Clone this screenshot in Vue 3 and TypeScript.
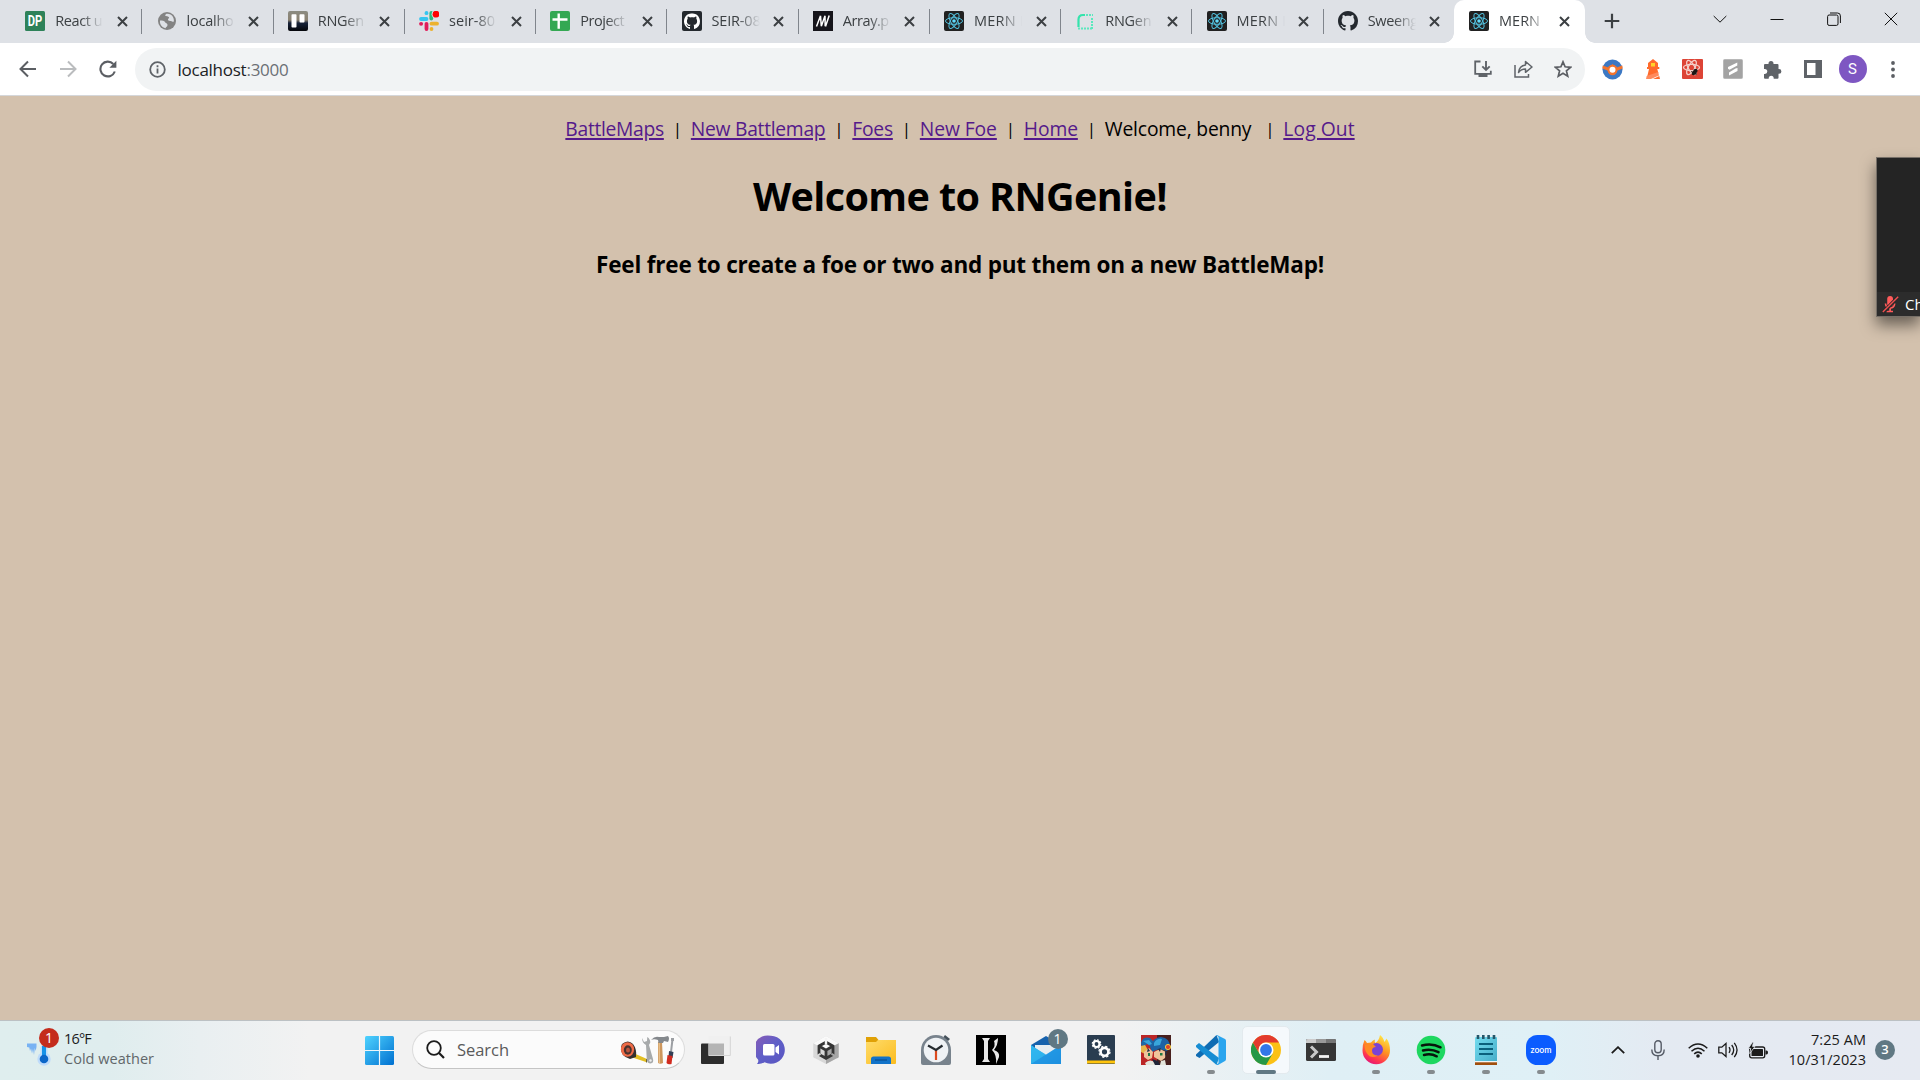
<script setup lang="ts">
interface Tab {
  icon: string
  title: string
  width: number
}

interface NavItem {
  label: string
  width: number
  link: boolean
}

const tabs: Tab[] = [
  { icon: 'dp', title: 'React u', width: 47 },
  { icon: 'globe', title: 'localho', width: 47 },
  { icon: 'trello', title: 'RNGen', width: 46 },
  { icon: 'slack', title: 'seir-80', width: 46 },
  { icon: 'sheet', title: 'Project', width: 44 },
  { icon: 'github-dark', title: 'SEIR-08', width: 49 },
  { icon: 'mdn', title: 'Array.p', width: 46 },
  { icon: 'react', title: 'MERN I', width: 50 },
  { icon: 'railway', title: 'RNGen', width: 46 },
  { icon: 'react', title: 'MERN I', width: 50 },
  { icon: 'github', title: 'Sweeng', width: 50 },
  { icon: 'react', title: 'MERN', width: 41 },
]

const navItems: NavItem[] = [
  { label: 'BattleMaps', width: 98.5, link: true },
  { label: 'New Battlemap', width: 134.5, link: true },
  { label: 'Foes', width: 40.5, link: true },
  { label: 'New Foe', width: 77, link: true },
  { label: 'Home', width: 54, link: true },
  { label: 'Welcome, benny', width: 146.5, link: false },
  { label: 'Log Out', width: 71.3, link: true },
]

const apps: string[] = [
  'taskview', 'chat', 'unity', 'explorer', 'clock', 'klei', 'mail', 'services',
  'game', 'vscode', 'chrome', 'terminal', 'firefox', 'spotify', 'notepad', 'zoom',
]
const running = new Set(['vscode', 'chrome', 'firefox', 'spotify', 'notepad', 'zoom'])

// Tracks a label in or out so that it occupies the given width.
const vFit = {
  mounted(el: HTMLElement, binding: { value: number }) {
    const chars = (el.textContent ?? '').length
    const spacing = (binding.value - el.getBoundingClientRect().width) / chars
    el.style.letterSpacing = `${spacing.toFixed(3)}px`
  },
}
</script>

<template>
  <div class="screen">
    <svg width="0" height="0" class="defs">
      <defs>
        <linearGradient id="win" x1="0" y1="0" x2="1" y2="1"><stop offset="0" stop-color="#4fd3ff" /><stop offset="1" stop-color="#0070d0" /></linearGradient>
        <linearGradient id="chatg" x1="0" y1="0" x2="1" y2="1"><stop offset="0" stop-color="#8a5bb5" /><stop offset=".5" stop-color="#5f5fc8" /><stop offset="1" stop-color="#5a55c0" /></linearGradient>
        <linearGradient id="fold" x1="0" y1="0" x2="1" y2="1"><stop offset="0" stop-color="#ffdc6b" /><stop offset="1" stop-color="#fbbc1f" /></linearGradient>
        <linearGradient id="ff" x1=".8" y1="0" x2=".3" y2="1"><stop offset="0" stop-color="#fff04a" /><stop offset=".45" stop-color="#ff9520" /><stop offset=".8" stop-color="#ff3550" /><stop offset="1" stop-color="#e3157a" /></linearGradient>
        <linearGradient id="note" x1="0" y1="0" x2="1" y2="1"><stop offset="0" stop-color="#74dcef" /><stop offset="1" stop-color="#45acc8" /></linearGradient>
        <linearGradient id="mailg" x1="0" y1="0" x2="1" y2="1"><stop offset="0" stop-color="#35c3f5" /><stop offset="1" stop-color="#1377cf" /></linearGradient>
        <linearGradient id="trel" x1="0" y1="0" x2="0" y2="1"><stop offset="0" stop-color="#8c8c82" /><stop offset=".45" stop-color="#8b8272" /><stop offset=".6" stop-color="#17233a" /><stop offset="1" stop-color="#05060a" /></linearGradient>
      </defs>
      <symbol id="react" viewBox="0 0 20 20">
        <rect width="20" height="20" rx="2" fill="#212121" />
        <g fill="none" stroke="#53c1de" stroke-width="1">
          <ellipse cx="10" cy="10" rx="8.5" ry="3.3" />
          <ellipse cx="10" cy="10" rx="8.5" ry="3.3" transform="rotate(60 10 10)" />
          <ellipse cx="10" cy="10" rx="8.5" ry="3.3" transform="rotate(120 10 10)" />
        </g>
        <circle cx="10" cy="10" r="1.8" fill="#61dafb" />
      </symbol>
      <symbol id="cat" viewBox="0 0 16 16">
        <path fill-rule="evenodd" d="M8 0C3.58 0 0 3.58 0 8c0 3.54 2.29 6.53 5.47 7.59.4.07.55-.17.55-.38 0-.19-.01-.82-.01-1.49-2.01.37-2.53-.49-2.69-.94-.09-.23-.48-.94-.82-1.13-.28-.15-.68-.52-.01-.53.63-.01 1.08.58 1.23.82.72 1.21 1.87.87 2.33.66.07-.52.28-.87.51-1.07-1.78-.2-3.64-.89-3.64-3.95 0-.87.31-1.59.82-2.15-.08-.2-.36-1.02.08-2.12 0 0 .67-.21 2.2.82.64-.18 1.32-.27 2-.27s1.36.09 2 .27c1.53-1.04 2.2-.82 2.2-.82.44 1.1.16 1.92.08 2.12.51.56.82 1.27.82 2.15 0 3.07-1.87 3.75-3.65 3.95.29.25.54.73.54 1.48 0 1.07-.01 1.93-.01 2.2 0 .21.15.46.55.38A8.01 8.01 0 0 0 16 8c0-4.42-3.58-8-8-8z" />
      </symbol>
    </svg>

    <header class="tabstrip">
      <div v-for="(tab, i) in tabs" :key="i" class="tab" :class="{ active: i === tabs.length - 1, last: i === tabs.length - 2 }">
        <svg class="favicon" viewBox="0 0 20 20">
          <template v-if="tab.icon === 'dp'">
            <rect width="20" height="20" rx="1.5" fill="#2e8259" />
            <text x="10" y="15.2" text-anchor="middle" font-size="14" font-weight="700" fill="#fff" font-family="Roboto, sans-serif" textLength="14.5" lengthAdjust="spacingAndGlyphs">DP</text>
          </template>
          <template v-else-if="tab.icon === 'globe'">
            <circle cx="10" cy="10" r="9" fill="#838383" />
            <path d="M3 9.500c2 .2 4.500 0 5 1.500s2.500 1 2.500 3-1.500 1.500-2 3.200C5 16.500 2.500 13.500 3 9.500zM9 3c2-.8 5.500.2 7 3 .8 1.500 1 3 .8 4.500-1 1-1.500-.5-3-.5-2 .2-3-.5-2.800-1.700.2-1 1.500-.8 1-2C11.500 5.200 9 5.500 8 4.500z" fill="#dee1e6" />
          </template>
          <template v-else-if="tab.icon === 'trello'">
            <rect width="20" height="20" rx="2" fill="url(#trel)" />
            <rect x="3.500" y="3.200" width="5" height="13.300" rx=".8" fill="#fff" /><rect x="11.500" y="3.200" width="5" height="8.300" rx=".8" fill="#fff" />
          </template>
          <template v-else-if="tab.icon === 'slack'">
            <g stroke-width="3.800" stroke-linecap="round" fill="none">
              <path d="M2 8h5.500" stroke="#36c5f0" /><path d="M7.500 2v.2" stroke="#36c5f0" />
              <path d="M12.300 2v5.500" stroke="#2eb67d" />
              <path d="M12.500 12.700H18" stroke="#ecb22e" /><path d="M12.500 18v.1" stroke="#ecb22e" />
              <path d="M7.500 12.800V18" stroke="#e01e5a" /><path d="M2 12.800h.2" stroke="#e01e5a" />
            </g>
            <circle cx="16.800" cy="3.300" r="4.200" fill="#dee1e6" /><circle cx="17" cy="3.200" r="3.400" fill="#f00" />
          </template>
          <template v-else-if="tab.icon === 'sheet'">
            <rect width="20" height="20" rx="2" fill="#34a853" />
            <path d="M8.700 2.500v15.300M2.500 8.500h15" stroke="#fff" stroke-width="2.400" />
          </template>
          <template v-else-if="tab.icon === 'github-dark'">
            <rect width="20" height="20" rx="2" fill="#24292e" /><use href="#cat" x="2" y="2.300" width="16" height="16" fill="#fff" />
          </template>
          <use v-else-if="tab.icon === 'github'" href="#cat" width="20" height="20" fill="#24292f" />
          <template v-else-if="tab.icon === 'mdn'">
            <rect width="20" height="20" fill="#15141a" />
            <path d="M3.500 15.500 7.500 4.800M7.500 4.800 8.300 15.300M8.300 15.300 12 4.800M12 4.800l.2 10.500M16.200 4.500 12.500 15.500" stroke="#fff" stroke-width="1.500" fill="none" />
          </template>
          <template v-else-if="tab.icon === 'railway'">
            <path d="M3.500 16V8.500q0-4.500 4.500-4.500h2" fill="none" stroke="#34e3ac" stroke-width="2.200" />
            <path d="M11 4h7M17 7v11M3 17.500h14" fill="none" stroke="#5be8be" stroke-width="2" stroke-dasharray="2 1" />
          </template>
          <use v-else href="#react" width="20" height="20" />
        </svg>
        <span class="title"><span v-fit="tab.width">{{ tab.title }}</span></span>
        <svg class="close" viewBox="0 0 11 11"><path d="M1 1l9 9M10 1l-9 9" stroke="#3c4043" stroke-width="2" /></svg>
      </div>
      <svg class="plus" viewBox="0 0 16 16"><path d="M8 .7v14.600M.7 8h14.600" stroke="#3c4043" stroke-width="2.200" /></svg>
      <div class="controls">
        <svg viewBox="0 0 14 14"><path d="M.7 4 7 10.200 13.300 4" /></svg>
        <svg viewBox="0 0 14 14"><path d="M.5 7.500h13" /></svg>
        <svg viewBox="0 0 14 14"><rect x=".6" y="3" width="10.400" height="10.400" rx="1.500" /><path d="M3 1h7.500q2.900 0 2.900 2.900V11" /></svg>
        <svg viewBox="0 0 14 14"><path d="M.8.8l12.400 12.400M13.200.8.800 13.200" /></svg>
      </div>
    </header>

    <div class="toolbar">
      <div class="slot"><svg width="18" height="18" viewBox="0 0 18 18"><path d="M17 9H2M9 1.500 1.500 9 9 16.500" fill="none" stroke="#5b5e63" stroke-width="2" /></svg></div>
      <div class="slot"><svg width="18" height="18" viewBox="0 0 18 18"><path d="M1 9h15M9 1.500 16.500 9 9 16.500" fill="none" stroke="#babcbe" stroke-width="2" /></svg></div>
      <div class="slot"><svg width="18" height="18" viewBox="0 0 18 18"><path d="M15.800 11.500A7.400 7.400 0 1 1 14.300 4" fill="none" stroke="#5b5e63" stroke-width="2.100" /><path d="M17.400.8v7h-7z" fill="#5b5e63" /></svg></div>
      <div class="omnibox">
        <svg width="17" height="17" viewBox="0 0 17 17"><circle cx="8.500" cy="8.500" r="7.300" fill="none" stroke="#5f6368" stroke-width="1.800" /><path d="M8.500 7.500v5M8.500 4.200v2" stroke="#5f6368" stroke-width="1.800" /></svg>
        <span class="url" v-fit="111">localhost<span class="port">:3000</span></span>
        <div class="actions">
          <svg width="18" height="18" viewBox="0 0 18 18"><path d="M6.500 1.500H1.200v12.300h15.600v-3" fill="none" stroke="#5f6368" stroke-width="1.800" /><path d="M4.500 14h9v3h-9z" fill="#5f6368" /><path d="M12 1v8.500M8.300 6.300l3.700 3.700 3.700-3.700" fill="none" stroke="#5f6368" stroke-width="1.900" /></svg>
          <svg width="19" height="18" viewBox="0 0 19 18"><path d="M1 5v12h13.500v-3" fill="none" stroke="#5f6368" stroke-width="1.500" /><path d="M11.500 1.500 18 7l-6.500 5.300V9Q7 9 4.500 12.500 5.300 5.800 11.500 5z" fill="none" stroke="#5f6368" stroke-width="1.500" stroke-linejoin="round" /></svg>
          <svg width="18" height="18" viewBox="0 0 18 18"><path d="M9 1.800l2.100 5 5.400.5-4.100 3.500 1.300 5.300L9 13.200l-4.700 2.900 1.300-5.300L1.500 7.300l5.400-.5z" fill="none" stroke="#5b5e63" stroke-width="1.700" /></svg>
        </div>
      </div>
      <div class="extensions">
        <div class="slot"><svg width="21" height="21" viewBox="0 0 21 21"><circle cx="10.500" cy="10.500" r="10" fill="#3c78c3" /><path d="M.7 6.500 7 8.800 10.500 5l3.500 3.800 6.300-2.300.4 3-5.700 2.200a4.500 4.500 0 0 1-9 0L.4 9.500z" fill="#f4742d" /><circle cx="10.500" cy="10.800" r="5" fill="#f4742d" /><circle cx="10.500" cy="10.800" r="3" fill="#fff" /></svg></div>
        <div class="slot"><svg width="16" height="20" viewBox="0 0 16 20"><path d="M3 4 8 0l5 4v4h1.300v2h-2l1 4L2 18.500 4 10H2V8h1z" fill="#ff6b2c" /><path d="M13.200 13 14 16.500 6 20H1l.7-3z" fill="#ff8a5c" /><path d="M14.300 17l.7 3H8z" fill="#ff6b2c" /><rect x="6" y="4" width="4" height="3.500" fill="#ffd42a" /></svg></div>
        <div class="slot"><svg width="21" height="20" viewBox="0 0 21 20"><rect width="21" height="20" rx="1" fill="#dd4436" /><g stroke="#f4d0ca" stroke-width="1.300" fill="none"><ellipse cx="9.500" cy="8.500" rx="8" ry="3.200" /><ellipse cx="9.500" cy="8.500" rx="8" ry="3.200" transform="rotate(60 9.500 8.500)" /><ellipse cx="9.500" cy="8.500" rx="8" ry="3.200" transform="rotate(120 9.500 8.500)" /></g><ellipse cx="12.700" cy="13" rx="2" ry="3.600" fill="#1d1514" transform="rotate(40 12.700 13)" /><path d="M9 12.500l6 2.500M10 16l5-5M12 10l2 6" stroke="#1d1514" stroke-width=".8" /></svg></div>
        <div class="slot"><svg width="20" height="20" viewBox="0 0 20 20"><rect x=".5" y=".5" width="19" height="19" rx="1" fill="#a3a3a3" stroke="#b8b8b8" /><path d="M14.300 3.500v3L6.500 10.800 5 9.800V8zM14.500 9v3L6 16.500v-3L12.500 9.500z" fill="#fff" /></svg></div>
        <div class="slot"><svg width="19" height="19" viewBox="0 0 19 19"><path d="M5.500 4V3.500a2.500 2.500 0 0 1 5 0V4h4q1 0 1 1v4h.5a2.400 2.400 0 0 1 0 4.800h-.5v4q0 1-1 1h-3.800v-.6a2.500 2.500 0 0 0-5 0v.6H2q-1 0-1-1V14h.8a2.500 2.500 0 0 0 0-5H1V5q0-1 1-1z" fill="#5f6368" /></svg></div>
        <div class="slot"><svg width="18" height="18" viewBox="0 0 18 18"><path fill-rule="evenodd" d="M0 0h18v18H0zM3 3v12h8.500V3z" fill="#5f6368" /></svg></div>
        <div class="slot"><span class="avatar">S</span></div>
        <div class="slot"><svg width="4" height="17" viewBox="0 0 4 17"><g fill="#5b5e63"><circle cx="2" cy="2" r="1.900" /><circle cx="2" cy="8.500" r="1.900" /><circle cx="2" cy="15" r="1.900" /></g></svg></div>
      </div>
    </div>

    <main class="page">
      <nav class="nav">
        <template v-for="(item, i) in navItems" :key="item.label">
          <span v-if="i" class="bar" :class="{ after: i === 6 }">|</span>
          <a v-if="item.link" v-fit="item.width">{{ item.label }}</a>
          <span v-else v-fit="item.width">{{ item.label }}</span>
        </template>
      </nav>
      <h1><span v-fit="414">Welcome to RNGenie!</span></h1>
      <h3><span v-fit="728">Feel free to create a foe or two and put them on a new BattleMap!</span></h3>
      <aside class="call">
        <div class="caption">
          <svg width="17" height="17" viewBox="0 0 17 17"><rect x="5.200" y="0" width="5.800" height="10.500" rx="2.900" fill="#ff5b5b" /><path d="M3.500 7.500q.5 4.500 4.600 4.500t4.600-4.500M8.100 12v3.500M4.500 15.500H11" fill="none" stroke="#ff5b5b" stroke-width="1.700" /><path d="M1 16.500 16 1" stroke="#292929" stroke-width="3.500" /><path d="M.8 16 16.200.8" stroke="#f05050" stroke-width="1.400" /></svg>
          <span>Ch</span>
        </div>
      </aside>
    </main>

    <footer class="taskbar">
      <div class="weather">
        <div class="weather-icon">
          <svg width="26" height="40" viewBox="0 0 26 40"><path d="M0 12.500h9.500v3.500l-.8 4-.9-3-.8 7-1-6-1 4.500-1-5-1 2.500-.7-3.500L0 16z" fill="#78b2f3" /><circle cx="17" cy="28" r="6.700" fill="#bedbfa" /><rect x="13.500" y="14" width="7" height="14" rx="3" fill="#bedbfa" /><rect x="15" y="15" width="4" height="12" fill="#1591e8" /><circle cx="17" cy="28" r="4.300" fill="#0b66c8" /></svg>
          <span class="count red">1</span>
        </div>
        <div class="weather-text">
          <span v-fit="27">16°F</span>
          <span v-fit="90" class="muted">Cold weather</span>
        </div>
      </div>

      <svg class="start" viewBox="0 0 29 29"><rect width="29" height="29" rx="1.500" fill="url(#win)" /><path d="M14.500 0v29M0 14.500h29" stroke="#eef6fa" stroke-width="1.200" /></svg>

      <div class="search">
        <svg width="19" height="19" viewBox="0 0 19 19"><circle cx="8" cy="8" r="6.800" fill="none" stroke="#1b1b1b" stroke-width="1.800" /><path d="M12.800 12.800 18 18" stroke="#1b1b1b" stroke-width="2.200" /></svg>
        <span class="placeholder" v-fit="52">Search</span>
        <svg class="tools" width="56" height="30" viewBox="0 0 56 30">
          <path d="M11 17l16 7-1 3-15-5z" fill="#e3bf22" /><path d="M26.500 24v3.500" stroke="#6b6035" />
          <path d="M2 9q6-5 11 0 4 5 3 13l-6 2Q0 21 1 12z" fill="#35302e" /><ellipse cx="7.500" cy="14.500" rx="6.600" ry="7.300" fill="#ef6b47" /><ellipse cx="7.800" cy="15" rx="4" ry="4.700" fill="#48322e" /><ellipse cx="8" cy="15" rx="2" ry="2.500" fill="#bb523c" />
          <path d="M22 3l2 4 3-1 .3-4q3 2 3 5.500L29 10l4 14q1 4-2.500 4.500-3 0-3.700-3.500L26 10Q22 8 22 3z" fill="#a7aaab" /><circle cx="30.500" cy="25.500" r="1.200" fill="#eee" />
          <path d="M38 7h4l1 21q-2.500 1.500-5 0z" fill="#cd965c" /><path d="M38.500 8h1.400l.2 20h-1.400z" fill="#e8bf88" /><path d="M31 5q4-4.500 8-3h5l4-1q2 2 0 6l-4-1-1 2h-4.500L38 5q-4-1.500-7 0z" fill="#84888c" />
          <path d="M51.500 4l2 .5L52 17h-2zM51 3h3v3h-3z" fill="#9c9fa3" /><path d="M49 16l4.500 1-1 6-4-1z" fill="#334057" /><path d="M47.500 20l5 1-1 8q-3.500 1-5-1z" fill="#d12b1f" />
        </svg>
      </div>

      <div class="apps">
        <div v-for="app in apps" :key="app" class="app" :class="{ running: running.has(app), focused: app === 'chrome' }">
          <svg class="app-icon" viewBox="0 0 30 30">
            <template v-if="app === 'taskview'"><rect x="0" y="8.500" width="23" height="20.500" rx="1" fill="#2d2d2d" /><rect x="7.500" y="1" width="22" height="20" rx="1" fill="#f0f0f0" /><rect x="7.500" y="8.500" width="15.500" height="12.500" fill="#b4b4b4" /><path d="M29.300 1.500V20.500H8" fill="none" stroke="#d5d5d5" /></template>
            <template v-else-if="app === 'chat'"><path d="M15 .8a14 14 0 1 1-6.500 26.500Q5 29.500 1 29q2-2.500 1-4.500A14 14 0 0 1 15 .8z" fill="url(#chatg)" /><rect x="7" y="9" width="11.500" height="11.500" rx="1.500" fill="#fff" /><path d="M19.500 12.500 23 10v9.500l-3.500-2.500z" fill="#fff" /></template>
            <template v-else-if="app === 'unity'"><path d="M15 1l12.700 7.200v14L15 29 2.300 22.200v-14z" fill="#d8d8d8" /><path d="M15 1l12.700 7.200L15 15 2.300 8.200z" fill="#fafafa" /><path d="M27.700 8.200v14L15 29V15z" fill="#a6a6a6" /><path d="M8 11l7-3.800L22 11v8.500L15 23.300 8 19.500zM15 15.200v8M8 11l7 4.200L22 11" fill="none" stroke="#353535" stroke-width="2.800" /><path d="M15 3v6" stroke="#f4f4f4" stroke-width="2.400" /><path d="M3 22.500l6.500-3.700" stroke="#d8d8d8" stroke-width="2" /><path d="M27 22.500l-6.500-3.700" stroke="#a6a6a6" stroke-width="2" /></template>
            <template v-else-if="app === 'explorer'"><path d="M0 2h10l2.500 3V10H0z" fill="#e0a106" /><path d="M0 7h10l2-2h18v23q0 1-1 1H1q-1 0-1-1z" fill="url(#fold)" /><path d="M5 29v-5q0-2.500 2.500-2.500h15q2.500 0 2.500 2.500v5z" fill="#1273c9" /><path d="M9 25h12" stroke="#0b4f91" stroke-width="1.200" /></template>
            <template v-else-if="app === 'clock'"><path d="M15 0a15 15 0 0 1 15 15v13q0 2-2 2H2q-2 0-2-2V15A15 15 0 0 1 15 0z" fill="#78838d" /><path d="M24 0l5 4-2 2-4.500-4z" fill="#44505a" /><circle cx="15" cy="15" r="12.300" fill="#eff2f5" /><path d="M15 15v10" stroke="#dc4b20" stroke-width="2.200" /><path d="M7 10.500 15 15l6.500-4.500" fill="none" stroke="#252b30" stroke-width="2.200" /></template>
            <template v-else-if="app === 'klei'"><rect width="30" height="30" fill="#000" /><path d="M6 3h8l-2 3v18l2 3H6l2-3V6zM16 15q4-4 2-9l4-3q0 7-4 12 6 2 5 7l-3 7q1-9-4-14z" fill="#e9e9e9" /></template>
            <template v-else-if="app === 'mail'"><path d="M0 10 15 1l15 9v3L15 24 0 13z" fill="#1662ad" /><path d="M4 10h22v5l-11 8L4 15z" fill="#e7edf1" /><path d="M0 10l15 10L30 10v19H0z" fill="url(#mailg)" /><path d="M0 29 30 10v19z" fill="#2196e3" opacity=".8" /><path d="M0 11v18L15 19.500z" fill="#31b7ef" opacity=".8" /></template>
            <template v-else-if="app === 'services'"><rect x="1" width="28" height="29" rx="1" fill="#2a3d50" /><rect x="1" y="25.500" width="28" height="3" fill="#ffc40c" /><g fill="none" stroke="#fff"><circle cx="10.500" cy="9" r="3" stroke-width="2.200" /><circle cx="10.500" cy="9" r="4.300" stroke-width="1.200" stroke-dasharray="1.800 1.580" /><circle cx="18.500" cy="16.800" r="3.900" stroke-width="2.600" /><circle cx="18.500" cy="16.800" r="5.500" stroke-width="1.300" stroke-dasharray="2.300 2.020" /></g></template>
            <template v-else-if="app === 'game'"><rect width="30" height="30" fill="#bb2626" /><path d="M16 0h14v30H16z" fill="#48201e" /><path d="M0 8Q2 1 9 3l4 4-1 6-6-4-5 4z" fill="#1d69a8" /><path d="M9 12Q12 2 20 2q9 1 9 10l-3 4-8-2-7 3z" fill="#1c62a4" /><path d="M2 6l6-1 3 4-3 1zM13 8q3-5 8-4l-2 6-6 1z" fill="#38a5db" /><path d="M0 11l4-1 3 5-3 4-4-2z" fill="#e7b64a" /><path d="M3 17l5-4 4 4-1 6-4 2-4-3zM13 17l6-3 6 3-1 6-4 3-7-4z" fill="#efc39a" /><path d="M17 14l3-1-1 4zM24 16l2 1-2 5zM7 13l2 3-3 1z" fill="#263047" /><circle cx="27" cy="12" r="2.600" fill="#d9402c" stroke="#edcc42" /><path d="M19 18h2.500v2.500H19zM7 18h2v3H7z" fill="#1d7741" /><path d="M4 28q5-5 11 0l-1 2H5zM20 26l4-1 1 5h-6z" fill="#e3e5db" /><path d="M11 24l6 2 2 4h-5z" fill="#1f2538" /></template>
            <template v-else-if="app === 'vscode'"><path d="M0 19.500 20.500 0 23 7 3.500 23 0 21z" fill="#0f6cb3" /><path d="M0 10.500 3 8l20 15-2.500 7L0 12z" fill="#168dd3" /><path d="M21 0l8 4q1 .5 1 2v18q0 1.500-1 2l-7 4q-1 0-1.500-.6L22.500 28V2L20.500.4z" fill="#2aa5ee" /></template>
            <template v-else-if="app === 'chrome'"><circle cx="15" cy="15" r="15" fill="#fbc116" /><path d="M2 7.500A15 15 0 0 0 15 30l6.500-11.200H8.500z" fill="#279847" /><path d="M2 7.500A15 15 0 0 1 28 7.500H15q-5 0-7 5l-.5 4.500z" fill="#e33b2e" /><circle cx="15" cy="15" r="7.500" fill="#fff" /><circle cx="15" cy="15" r="5.900" fill="#3277e8" /></template>
            <template v-else-if="app === 'terminal'"><rect y="4" width="30" height="22" rx="1.500" fill="#363636" /><path d="M0 8V5.500Q0 4 1.500 4H10v4z" fill="#ccc" /><path d="M10 4h10v4H10z" fill="#999" /><path d="M20 4h8.500Q30 4 30 5.500V8H20z" fill="#757575" /><path d="M5 11.500 10.500 17 5 22.500" fill="none" stroke="#c8c8c8" stroke-width="3" /><path d="M13 21.500h10" stroke="#f2f2f2" stroke-width="2.800" /></template>
            <template v-else-if="app === 'firefox'"><path d="M3.500 5q1.500 1 2.500 3l4-.5Q12 5 14 4.500q-1 2 .5 3.500Q18 5.500 19 0q3 2 4.500 7l2-3.500Q29 8 29 15.500A13.700 13.700 0 0 1 1.500 15.500Q1.500 9 3.500 5z" fill="url(#ff)" /><circle cx="15.500" cy="14.500" r="6.500" fill="#7a43d5" /><path d="M4 10q5-2 8-1l3 3q-4 0-4 3.500 0 5 6 5-7 4-11-2-3-4-2-8.500z" fill="#ff8a24" /></template>
            <template v-else-if="app === 'spotify'"><circle cx="15" cy="15" r="14.300" fill="#1ed760" /><path d="M6 10.500q10-2.700 18.500 1.800M7 15.500q8-2.300 15.500 1.700M8 20q7-1.800 12.700 1.300" fill="none" stroke="#07150b" stroke-width="2.500" stroke-linecap="round" /></template>
            <template v-else-if="app === 'notepad'"><path d="M4 3q0-1 1-1h20q1 0 1 1v25H4z" fill="url(#note)" /><path d="M4 27h22v3H4z" fill="#a04e0c" /><path d="M4 26h22v1.300H4z" fill="#f2f5f5" /><path d="M7 0v4M12.300 0v4M17.600 0v4M23 0v4" stroke="#245669" stroke-width="2.600" /><path d="M8 9h14M8 14h14M8 19h14" stroke="#0b607c" stroke-width="2" /></template>
            <template v-else><rect width="30" height="30" rx="11.500" fill="#0b5cff" /><text x="15" y="17.600" text-anchor="middle" font-size="9" font-weight="600" fill="#fff" font-family="Lato, sans-serif" textLength="21" lengthAdjust="spacingAndGlyphs">zoom</text></template>
          </svg>
          <span v-if="app === 'mail'" class="count slate">1</span>
        </div>
      </div>

      <div class="tray">
        <svg width="14" height="8" viewBox="0 0 14 8"><path d="M.8 7.200 7 1.200l6.200 6" fill="none" stroke="#1b1b1b" stroke-width="1.800" /></svg>
        <svg class="mic" width="14" height="20" viewBox="0 0 14 20"><rect x="3.800" y=".8" width="6.400" height="12" rx="3.200" fill="none" stroke="#555b66" stroke-width="1.400" /><path d="M.8 9.500q0 6.200 6.200 6.200t6.200-6.200M7 15.700V20" fill="none" stroke="#555b66" stroke-width="1.400" /></svg>
        <svg width="20" height="15" viewBox="0 0 20 15"><path d="M.7 5.200q9.300-8.500 18.600 0M3.500 8.200q6.500-6 13 0M6.200 10.900q3.800-3.500 7.600 0" fill="none" stroke="#1b1b1b" stroke-width="1.500" /><circle cx="10" cy="13" r="1.800" fill="#1b1b1b" /></svg>
        <svg width="20" height="16" viewBox="0 0 20 16"><path d="M.8 5.200h3L8 1.500v13l-4.200-3.700h-3zM11 5.200q2 2.800 0 5.600M13.700 3q4 5 0 10M16.300.8q5.500 7.200 0 14.400" fill="none" stroke="#1b1b1b" stroke-width="1.300" /></svg>
        <svg width="20" height="17" viewBox="0 0 20 17"><rect x="1.700" y="5" width="15" height="10.800" rx="2" fill="none" stroke="#1b1b1b" stroke-width="1.300" /><rect x="3.500" y="7" width="11.500" height="7" rx=".5" fill="#1b1b1b" /><path d="M17.500 8.500h1q1.500 0 1.500 2t-1.500 2h-1z" fill="#1b1b1b" /><path d="M4.500 0 .3 6.500h2.400L1.700 11.500 7 4.500H4.500L5.500 0z" fill="#1b1b1b" stroke="#e6ebf2" stroke-width=".8" /></svg>
      </div>
      <div class="datetime">
        <span v-fit="55">7:25 AM</span>
        <span v-fit="77.5">10/31/2023</span>
      </div>
      <span class="count slate bell">3</span>
    </footer>
  </div>
</template>

<style>
body {
  margin: 0;
  overflow: hidden;
}
</style>

<style scoped>
* {
  box-sizing: border-box;
}
.screen {
  width: 1920px;
  height: 1080px;
  display: flex;
  flex-direction: column;
  overflow: hidden;
  font-family: "Open Sans", "Noto Sans", sans-serif;
  font-weight: 370;
  white-space: nowrap;
}
.defs {
  position: absolute;
}
svg {
  display: block;
  flex: none;
}
.tabstrip {
  height: 43px;
  flex: none;
  display: flex;
  background: #dee1e6;
  padding-left: 10px;
}
.tab {
  position: relative;
  flex: none;
  width: 131.250px;
  height: 43px;
  display: flex;
  align-items: center;
  padding-left: 15.300px;
}
.tab::after {
  content: "";
  position: absolute;
  right: -1px;
  top: 9px;
  width: 1px;
  height: 25px;
  background: #80858c;
}
.tab.active::after,
.tab.last::after {
  display: none;
}
.tab.active {
  background: #fff;
  border-radius: 10px 10px 0 0;
}
.tab.active::before {
  content: "";
  position: absolute;
  left: -10px;
  right: -10px;
  bottom: 0;
  height: 10px;
  background:
    radial-gradient(circle at 0 0, #dee1e6 9.500px, #fff 10px) left / 10px 10px no-repeat,
    radial-gradient(circle at 10px 0, #dee1e6 9.500px, #fff 10px) right / 10px 10px no-repeat;
}
.favicon {
  width: 20px;
  height: 20px;
  margin-top: -1px;
}
.title {
  width: 50px;
  margin-left: 10px;
  font-size: 14.500px;
  line-height: 22px;
  margin-top: -2px;
  color: #3c4043;
  -webkit-mask-image: linear-gradient(90deg, #000 26px, transparent 48px);
  mask-image: linear-gradient(90deg, #000 26px, transparent 48px);
}
.close {
  width: 11px;
  height: 11px;
  margin-left: 11.500px;
}
.active .close {
  margin-left: 10px;
}
.plus {
  width: 16px;
  height: 16px;
  margin: 13px 0 0 18.500px;
}
.controls {
  display: flex;
  gap: 43.200px;
  margin: 12px 0 0 93px;
}
.controls svg {
  width: 14px;
  height: 14px;
  fill: none;
  stroke: #111;
  stroke-width: 1;
}
.toolbar {
  height: 53px;
  flex: none;
  display: flex;
  align-items: center;
  background: #fff;
  border-bottom: 1px solid #d5d7da;
  padding-left: 7.500px;
}
.slot {
  width: 40px;
  flex: none;
  display: flex;
  justify-content: center;
}
.omnibox {
  width: 1450px;
  height: 43px;
  margin-left: 7.500px;
  border-radius: 22px;
  background: #f1f3f4;
  display: flex;
  align-items: center;
  padding: 0 13px 0 14px;
}
.url {
  margin-left: 11.500px;
  font-size: 17px;
  color: #202124;
}
.port {
  color: #6b6f74;
}
.actions {
  margin-left: auto;
  display: flex;
  gap: 21.500px;
}
.extensions {
  display: flex;
  align-items: center;
  margin-left: 7.500px;
}
.avatar {
  width: 28px;
  height: 28px;
  border-radius: 50%;
  background: #7e57c2;
  color: #fff;
  font: 15px/28px Roboto, sans-serif;
  text-align: center;
}
.page {
  position: relative;
  flex: 1;
  background: #d3c1ad;
  color: #000;
  text-align: center;
}
.nav {
  display: flex;
  justify-content: center;
  align-items: center;
  height: 28px;
  margin-top: 19px;
  font-size: 19.300px;
  line-height: 28px;
}
.nav a {
  color: #551a8b;
  text-decoration: underline;
  text-decoration-thickness: 2px;
  text-underline-offset: 2px;
  text-decoration-skip-ink: auto;
}
.bar {
  width: 27px;
  font-size: 17px;
  font-weight: 400;
  text-align: center;
}
.bar.after {
  margin-left: 5px;
}
h1 {
  margin: 26px 0 0;
  font-size: 39.500px;
  line-height: 54px;
}
h3 {
  margin: 26px 0 0;
  font-size: 22.500px;
  line-height: 32px;
}
.call {
  position: absolute;
  right: 0;
  top: 61px;
  width: 44px;
  height: 160px;
  background: #242424;
  border: 1px solid #777068;
  border-right: 0;
  box-shadow: 0 8px 15px rgba(0, 0, 0, 0.500);
  display: flex;
  align-items: flex-end;
}
.caption {
  width: 43px;
  height: 24px;
  overflow: hidden;
  background: #2c2c2c;
  display: flex;
  align-items: center;
  padding-left: 5px;
  color: #fff;
  font-size: 15px;
}
.caption span {
  margin-left: 6px;
}
.taskbar {
  height: 60px;
  flex: none;
  display: flex;
  align-items: center;
  border-top: 1px solid #bcc1c4;
  padding-bottom: 1px;
  background: linear-gradient(90deg, #dfeeee 0, #dfedee 110px, #e9eff1 200px, #f2f2f2 310px, #f2f2f2 1120px, #dfeff5 1330px, #dff0f6 1550px, #e4eaf2 1660px, #e6eaf2 1920px);
}
.weather {
  width: 365px;
  display: flex;
  padding-left: 27px;
}
.weather-icon {
  position: relative;
  width: 26px;
  height: 40px;
}
.weather-icon svg {
  margin-top: 1px;
}
.count {
  width: 20px;
  height: 20px;
  border-radius: 50%;
  color: #fff;
  font-size: 14px;
  font-weight: 400;
  line-height: 19px;
  text-align: center;
}
.red {
  position: absolute;
  left: 12px;
  top: -2px;
  background: #c42b1c;
}
.slate {
  background: #607883;
}
.weather-text,
.datetime {
  display: flex;
  flex-direction: column;
  align-items: flex-start;
  margin-top: -1px;
  font-size: 14.500px;
  line-height: 20px;
  color: #1b1b1b;
}
.weather-text {
  margin-left: 11px;
}
.muted {
  color: #61676a;
}
.start {
  width: 29px;
  height: 29px;
}
.search {
  width: 273px;
  height: 39px;
  margin: -1px 0 0 17.500px;
  border: 1px solid #dcdcdc;
  border-bottom-color: #c5c5c5;
  border-radius: 20px;
  background: #fbfbfb;
  display: flex;
  align-items: center;
  padding-left: 13px;
}
.placeholder {
  margin-left: 12.500px;
  font-size: 16.500px;
  color: #5a5a5a;
}
.tools {
  margin: 1px 8px 0 auto;
}
.apps {
  display: flex;
  margin-left: 4px;
}
.app {
  position: relative;
  width: 55px;
  height: 58px;
  display: flex;
  align-items: center;
  justify-content: center;
}
.app-icon {
  position: relative;
  width: 30px;
  height: 30px;
}
.focused::before {
  content: "";
  position: absolute;
  inset: 5px 3.500px 5px;
  border: 1px solid #e3eaee;
  border-radius: 5px;
  background: #f5f9fc;
}
.running::after {
  content: "";
  position: absolute;
  left: 23.500px;
  bottom: 5px;
  width: 8px;
  height: 4px;
  border-radius: 2px;
  background: #858b8e;
}
.focused::after {
  left: 17.500px;
  width: 20px;
  background: #607883;
}
.app .count {
  position: absolute;
  left: 29px;
  top: 8px;
}
.tray {
  display: flex;
  align-items: center;
  gap: 10px;
  margin-left: 42.500px;
}
.mic {
  margin-left: 16px;
}
.mic + svg {
  margin-left: 13px;
}
.datetime {
  width: 98px;
  align-items: flex-end;
}
.bell {
  margin-left: 9px;
  font-size: 13px;
  font-weight: 600;
}
</style>
